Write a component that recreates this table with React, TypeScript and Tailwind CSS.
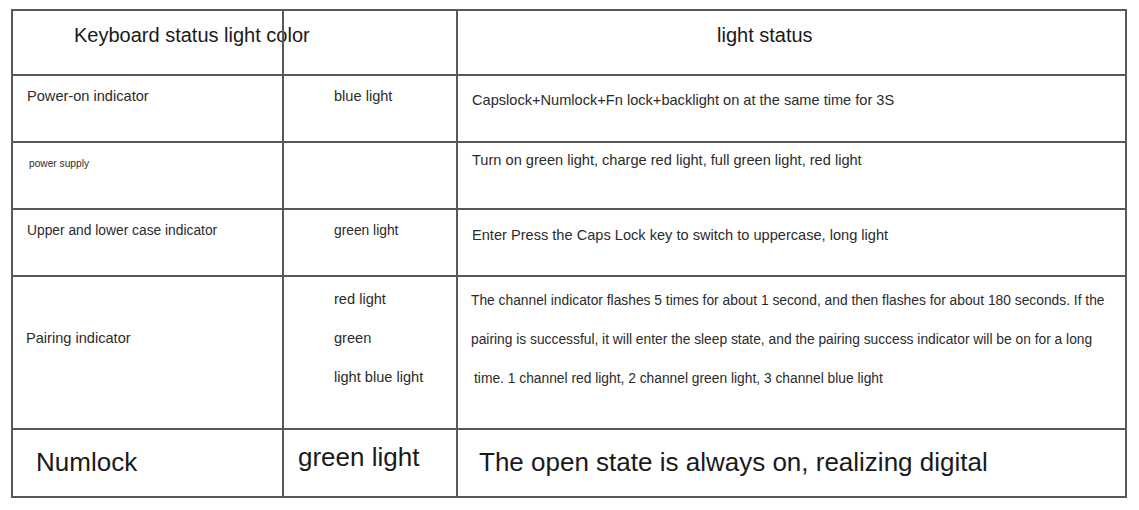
const line = "border-[#585858]";

const Cell = ({
  className = "",
  children,
}: {
  className?: string;
  children?: React.ReactNode;
}) => (
  <div className={`border-r-2 border-b-2 ${line} ${className}`}>{children}</div>
);

const App = () => {
  return (
    <div
      className="h-[510px] w-[1139px] bg-white pt-[9px] pl-[11px] text-[#2b2b2b]"
      style={{ fontFamily: '"Liberation Sans", Arial, sans-serif' }}
    >
      <div
        className={`isolate grid w-[1116px] grid-cols-[271px_174px_669px] grid-rows-[65px_67px_67px_67px_153px_68px] border-t-2 border-l-2 ${line}`}
      >
        {/* header */}
        <Cell className="pt-[12px] pl-[61px]">
          <div className="relative -z-10 whitespace-nowrap text-[20px] leading-[24px] text-[#1a1a1a]">
            Keyboard status light color
          </div>
        </Cell>
        <Cell />
        <Cell className="pt-[12px] pl-[259px]">
          <div className="text-[20px] leading-[24px] text-[#1a1a1a]">light status</div>
        </Cell>

        {/* power on */}
        <Cell className="pt-[12px] pl-[14px] text-[14.6px] leading-[17px]">Power-on indicator</Cell>
        <Cell className="pt-[12px] pl-[50px] text-[14.6px] leading-[17px]">blue light</Cell>
        <Cell className="pt-[16px] pl-[14px] text-[14.6px] leading-[17px]">
          Capslock+Numlock+Fn lock+backlight on at the same time for 3S
        </Cell>

        {/* power supply */}
        <Cell className="pt-[15px] pl-[16px] text-[10.2px] leading-[12px]">power supply</Cell>
        <Cell />
        <Cell className="pt-[9px] pl-[14px] text-[14.6px] leading-[17px]">
          Turn on green light, charge red light, full green light, red light
        </Cell>

        {/* caps */}
        <Cell className="pt-[13px] pl-[14px] text-[13.8px] leading-[16px]">
          Upper and lower case indicator
        </Cell>
        <Cell className="pt-[13px] pl-[50px] text-[13.8px] leading-[16px]">green light</Cell>
        <Cell className="pt-[17px] pl-[14px] text-[14.6px] leading-[17px]">
          Enter Press the Caps Lock key to switch to uppercase, long light
        </Cell>

        {/* pairing */}
        <Cell className="pt-[53px] pl-[13px] text-[14.6px] leading-[17px]">Pairing indicator</Cell>
        <Cell className="flex flex-col gap-[22px] pt-[14px] pl-[50px] text-[14.6px] leading-[17px]">
          <span>red light</span>
          <span>green</span>
          <span>light blue light</span>
        </Cell>
        <Cell className="flex flex-col gap-[23px] pt-[16px] pl-[13px] text-[13.8px] leading-[16px]">
          <span className="whitespace-nowrap">
            The channel indicator flashes 5 times for about 1 second, and then flashes for about 180 seconds. If the
          </span>
          <span className="whitespace-nowrap">
            pairing is successful, it will enter the sleep state, and the pairing success indicator will be on for a long
          </span>
          <span className="pl-[3px]">
            time. 1 channel red light, 2 channel green light, 3 channel blue light
          </span>
        </Cell>

        {/* numlock */}
        <Cell className="pt-[17px] pl-[23px] text-[26px] leading-[30px] text-[#1a1a1a]">Numlock</Cell>
        <Cell className="pt-[12px] pl-[14px] text-[26px] leading-[30px] text-[#1a1a1a]">
          green light
        </Cell>
        <Cell className="pt-[17px] pl-[21px] text-[26px] leading-[30px] text-[#1a1a1a]">
          The open state is always on, realizing digital
        </Cell>
      </div>
    </div>
  );
};

export default App;
